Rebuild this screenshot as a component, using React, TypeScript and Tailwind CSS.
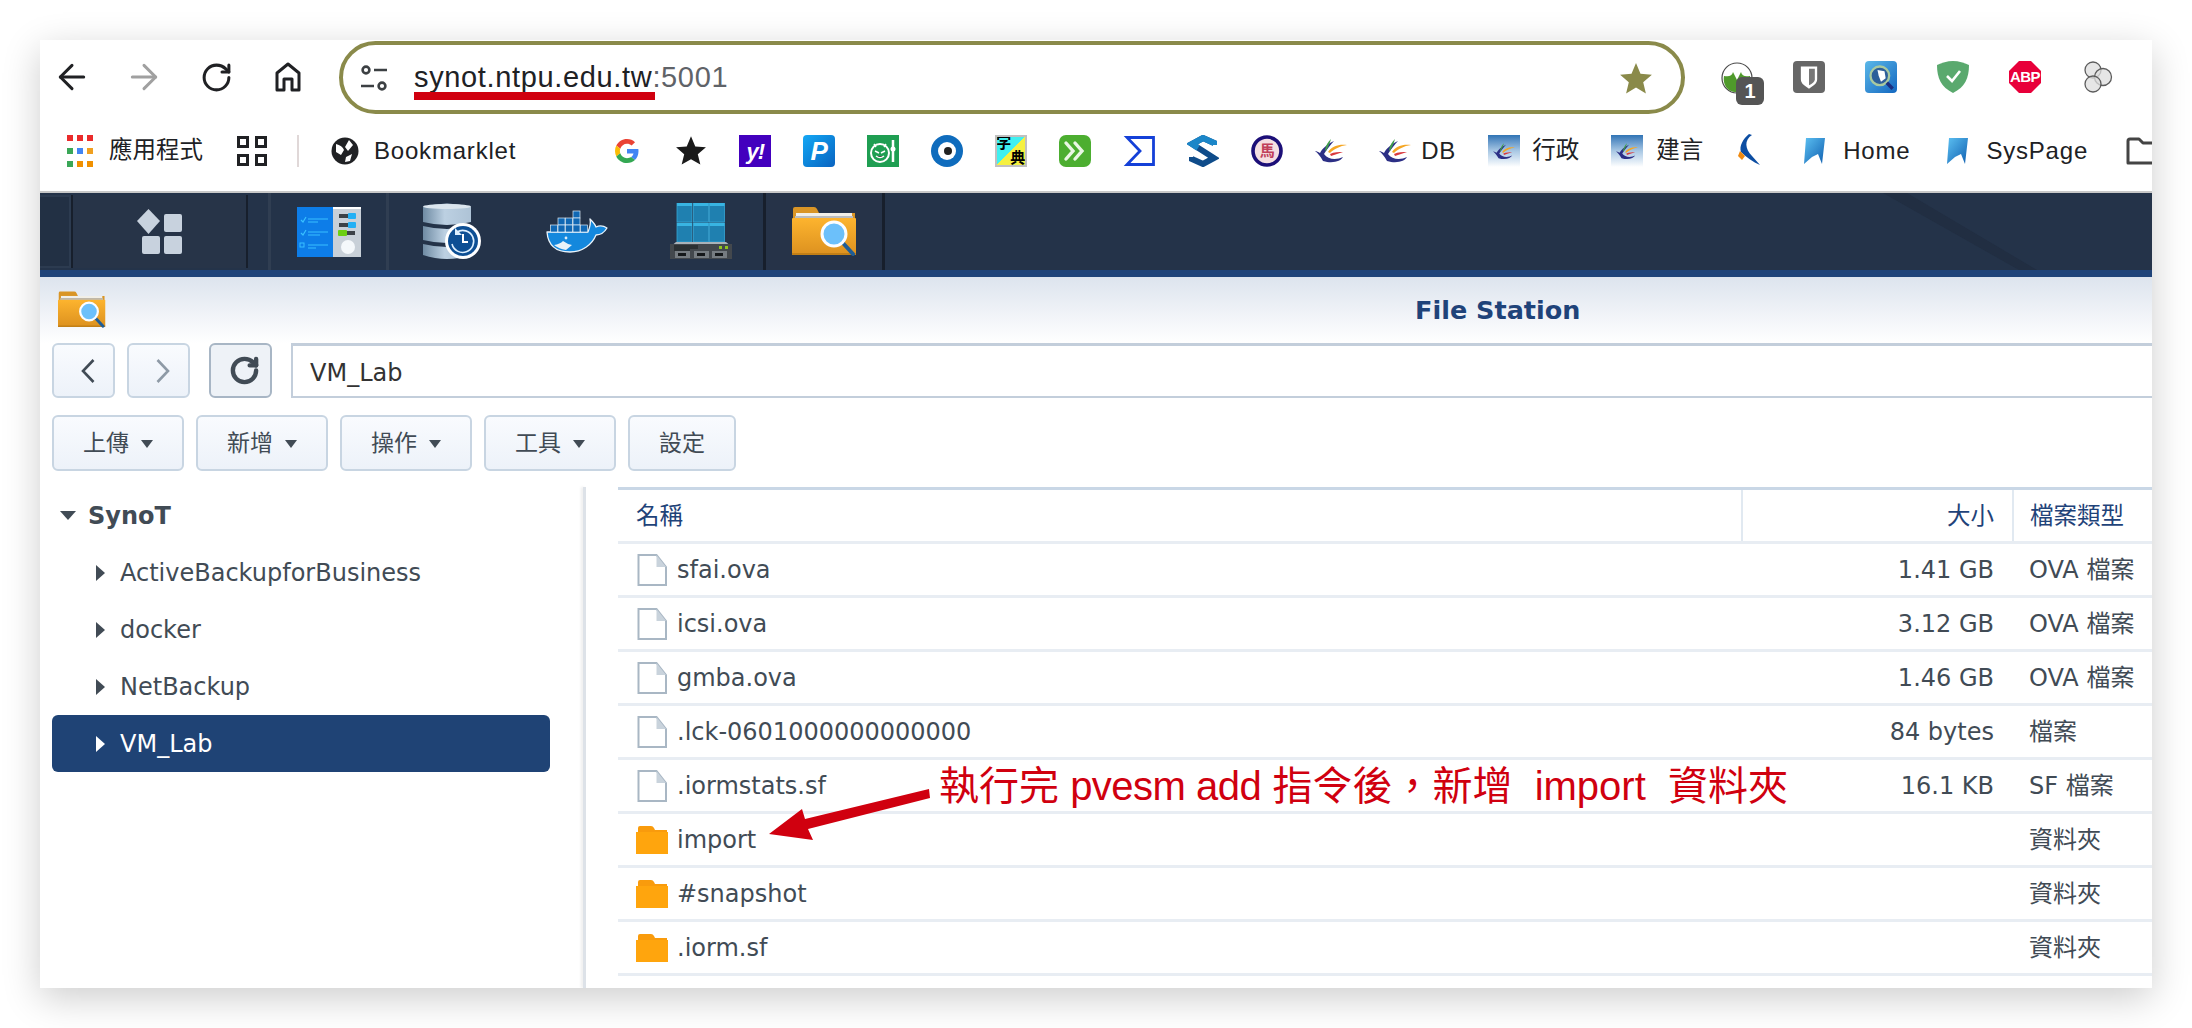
import { ArrowLeft, ArrowRight, RotateCw } from "lucide-react";

const CJK = "font-['Liberation_Sans','Noto_Sans_CJK_TC',sans-serif]";
const DSM = "font-['DejaVu_Sans','Noto_Sans_CJK_TC',sans-serif]";
const LATIN_MARK = "text-[24px] tracking-[0.8px]";
const CJK_MARK = "text-[23.5px]";

const files = [
  { name: "sfai.ova", size: "1.41 GB", type: "OVA 檔案", folder: false },
  { name: "icsi.ova", size: "3.12 GB", type: "OVA 檔案", folder: false },
  { name: "gmba.ova", size: "1.46 GB", type: "OVA 檔案", folder: false },
  { name: ".lck-0601000000000000", size: "84 bytes", type: "檔案", folder: false },
  { name: ".iormstats.sf", size: "16.1 KB", type: "SF 檔案", folder: false },
  { name: "import", size: "", type: "資料夾", folder: true },
  { name: "#snapshot", size: "", type: "資料夾", folder: true },
  { name: ".iorm.sf", size: "", type: "資料夾", folder: true },
];

const treeItems = ["ActiveBackupforBusiness", "docker", "NetBackup"];
const menus = ["上傳", "新增", "操作", "工具"];

function FolderSearch({ className }: { className: string }) {
  return (
    <svg viewBox="0 0 65 52" className={className}>
      <defs>
        <linearGradient id="fs" x1="0" y1="0" x2="0" y2="1">
          <stop offset="0" stopColor="#fdb42e" />
          <stop offset="1" stopColor="#dd9220" />
        </linearGradient>
      </defs>
      <path d="M1 16V3q0-2 2-2h19q2 0 3 2l2 4h36v12z" fill="#d99526" />
      <rect x="4" y="7" width="56" height="3" fill="#f1efe8" />
      <rect x="3" y="10" width="58" height="3" fill="#b9bcc0" />
      <rect x="0" y="12" width="64" height="36" rx="1" fill="url(#fs)" />
      <rect x="0" y="47" width="64" height="2" fill="#c27f16" />
      <path d="M50 36l11 12" stroke="#1f5d96" strokeWidth="4" strokeLinecap="round" />
      <circle cx="42" cy="28" r="12" fill="#6cc0fa" stroke="#fbfdff" strokeWidth="3" />
    </svg>
  );
}

function TileIcon() {
  return (
    <svg viewBox="0 0 45 45" className="h-[45px] w-[45px]">
      <path d="M11.5 0L23 12 11.5 25 0 12z" fill="#c8d2de" />
      <rect x="27" y="5" width="18" height="18" rx="2" fill="#c8d2de" />
      <rect x="5" y="27" width="18" height="18" rx="2" fill="#c8d2de" />
      <rect x="27" y="27" width="18" height="18" rx="2" fill="#c8d2de" />
    </svg>
  );
}

function PanelIcon() {
  return (
    <svg viewBox="0 0 64 50" className="h-[50px] w-[64px]">
      <rect x="36" y="0" width="28" height="50" fill="#c8d0d8" />
      <rect x="36" y="0" width="28" height="2" fill="#fff" />
      <rect x="0" y="0" width="36" height="50" fill="#0d7de8" />
      <path d="M4 13l2 2 3-5M4 26l2 2 3-5" stroke="#38c0ff" strokeWidth="1.2" fill="none" />
      <rect x="3" y="36" width="4" height="4" fill="none" stroke="#38c0ff" strokeWidth="1" />
      <path d="M11 12h20M11 15h10M11 25h20M11 28h12M11 38h20M11 41h8" stroke="#38c0ff" strokeWidth="1" />
      <rect x="42" y="7" width="16" height="4" fill="#3c4248" />
      <rect x="51" y="6" width="8" height="6" rx="1" fill="#22b0f5" />
      <rect x="42" y="16" width="16" height="4" fill="#3c4248" />
      <rect x="51" y="15" width="8" height="6" rx="1" fill="#22b0f5" />
      <rect x="42" y="24" width="16" height="4" fill="#3c4248" />
      <rect x="41" y="23" width="9" height="6" rx="1" fill="#6ccf12" />
      <circle cx="51" cy="40" r="7" fill="#f4f8fb" />
    </svg>
  );
}

function DbIcon() {
  return (
    <svg viewBox="0 0 60 58" className="h-[58px] w-[60px]">
      <defs>
        <linearGradient id="cy" x1="0" y1="0" x2="1" y2="0">
          <stop offset="0" stopColor="#6f8ba3" />
          <stop offset=".45" stopColor="#bcd0e2" />
          <stop offset="1" stopColor="#aec3d6" />
        </linearGradient>
      </defs>
      <path d="M1 4q24-7 48 0v15q-24 6-48 0z" fill="url(#cy)" />
      <path d="M1 23q24 6 48 0v14q-24 6-48 0z" fill="url(#cy)" />
      <path d="M1 41q24 6 48 0v11q-24 8-48 0z" fill="url(#cy)" />
      <ellipse cx="25" cy="3.5" rx="24" ry="2.5" fill="#dbe5ee" />
      <circle cx="41" cy="38" r="18" fill="#fff" />
      <circle cx="41" cy="38" r="15" fill="#0d4f94" />
      <path d="M35 29a11 11 0 1 1-5 12" fill="none" stroke="#dcefff" strokeWidth="1.6" />
      <path d="M33 25v7h7z" fill="#dcefff" />
      <path d="M41 31v8h5" fill="none" stroke="#fff" strokeWidth="2" />
    </svg>
  );
}

function DockerIcon() {
  const boxes = [
    [27, 1],
    [12, 8],
    [19.5, 8],
    [27, 8],
    [4.5, 15],
    [12, 15],
    [19.5, 15],
    [27, 15],
    [34.5, 15],
  ];
  return (
    <svg viewBox="0 0 62 43" className="h-[43px] w-[62px]">
      <path
        d="M1 22H42C44 17 45 13 44 9 47 12 49 14 50 17 54 15 58 16 61 18 58 23 54 25 50 25 46 35 36 42 24 42 10 42 2 35 1 22z"
        fill="#1488dd"
        stroke="#eaf4fb"
        strokeWidth="1.3"
        strokeLinejoin="round"
      />
      <path d="M8 35q6-1 9-4 4 3 9 4l-6 5q-7-1-12-5z" fill="#e8f2f8" />
      <circle cx="20" cy="28" r="1.4" fill="#dcecf8" />
      {boxes.map(([x, y]) => (
        <rect key={`${x}-${y}`} x={x} y={y} width="7" height="7" fill="#1068b4" stroke="#dfeef8" strokeWidth=".7" />
      ))}
    </svg>
  );
}

function ServerIcon() {
  const cells = [7, 23.5, 39.5];
  return (
    <svg viewBox="0 0 62 57" className="h-[57px] w-[62px]">
      {[0, 20].map((y) =>
        cells.map((x) => (
          <g key={`${x}-${y}`}>
            <rect x={x} y={y} width="15" height="19" fill="#1f80b0" stroke="#36a6d6" strokeWidth=".8" />
            <rect x={x} y={y} width="15" height="3" fill="#38b4e2" />
          </g>
        )),
      )}
      <path d="M6 39h50l6 5H0z" fill="#aab2b8" />
      <rect x="0" y="41" width="62" height="15" fill="#43484d" />
      <path d="M4 43h24M4 45h24M4 47h16" stroke="#15181a" strokeWidth="1" />
      <rect x="49" y="43" width="3" height="3" fill="#8fc31f" />
      <rect x="55" y="43" width="3" height="3" fill="#8fc31f" />
      {[5, 24, 42].map((x) => (
        <g key={x}>
          <rect x={x} y="48" width="15" height="7" fill="#767c81" />
          <rect x={x + 3} y="50" width="8" height="3" fill="#15181a" />
        </g>
      ))}
    </svg>
  );
}

function GoogleIcon() {
  return (
    <svg viewBox="0 0 48 48" className="h-6 w-6">
      <path fill="#EA4335" d="M24 9.5c3.54 0 6.71 1.22 9.21 3.6l6.85-6.85C35.9 2.38 30.47 0 24 0 14.62 0 6.51 5.38 2.56 13.22l7.98 6.19C12.43 13.72 17.74 9.5 24 9.5z" />
      <path fill="#4285F4" d="M46.98 24.55c0-1.57-.15-3.09-.38-4.55H24v9.02h12.94c-.58 2.96-2.26 5.48-4.78 7.18l7.73 6c4.51-4.18 7.09-10.36 7.09-17.65z" />
      <path fill="#FBBC05" d="M10.53 28.59c-.48-1.45-.76-2.99-.76-4.59s.27-3.14.76-4.59l-7.98-6.19C.92 16.46 0 20.12 0 24c0 3.88.92 7.54 2.56 10.78l7.97-6.19z" />
      <path fill="#34A853" d="M24 48c6.48 0 11.93-2.13 15.89-5.81l-7.73-6c-2.15 1.45-4.92 2.3-8.16 2.3-6.26 0-11.57-4.22-13.47-9.91l-7.98 6.19C6.51 42.62 14.62 48 24 48z" />
    </svg>
  );
}

function Feather({ className }: { className: string }) {
  return (
    <svg viewBox="0 0 32 28" className={className}>
      <path d="M8 24C18 27 26 24 28 20 22 23 13 23 9 17 13 11 16 7 19 4 12 7 7 12 5 16 3 15 2 14 0 14 3 16 5 19 8 24z" fill="#2c2f85" />
      <path d="M13 15C17 9 24 7 32 8 25 9 19 12 15 16z" fill="#f5a623" />
      <path d="M15 17C19 15 24 15 28 15 24 16 20 18 16 19z" fill="#d9393e" />
      <path d="M10 13C11 8 13 5 16 2 15 6 13 10 11 14z" fill="#3f9c4a" />
    </svg>
  );
}

function BlueFeatherTile() {
  return (
    <div className="flex h-8 w-8 items-center justify-center bg-gradient-to-b from-[#2f74b5] via-[#a9c8e4] to-white">
      <Feather className="h-[19px] w-[22px]" />
    </div>
  );
}

function Ribbon() {
  return (
    <svg viewBox="0 0 21 28" className="h-7 w-[21px]">
      <defs>
        <linearGradient id="rb" x1="0" y1="0" x2="1" y2="1">
          <stop offset="0" stopColor="#5cc0f2" />
          <stop offset="1" stopColor="#0f5fb0" />
        </linearGradient>
      </defs>
      <path d="M2 1h19l-3 26-4-10-6 3-8 7z" fill="url(#rb)" />
    </svg>
  );
}

function Toolbar() {
  return (
    <div className="flex h-[87px] items-start bg-white">
      <div className="flex h-[74px] items-center pl-3">
        <ArrowLeft size={40} strokeWidth={1.8} className="text-[#202124]" />
        <ArrowRight size={40} strokeWidth={1.8} className="ml-[32px] text-[#a0a0a0]" />
        <RotateCw size={33} strokeWidth={2.2} className="ml-[36px] text-[#202124]" />
        <svg viewBox="0 0 26 30" className="ml-[42px] h-[30px] w-[26px]">
          <path d="M2 28V11L13 2l11 9v17h-7V17H9v11z" fill="none" stroke="#202124" strokeWidth="3" strokeLinejoin="round" />
        </svg>
      </div>
      <div className="mt-px ml-[38px] flex h-[73px] w-[1346px] items-center rounded-full border-[4px] border-[#8a8a4a] bg-white pr-[27px] pl-[18px]">
        <svg viewBox="0 0 26 26" className="h-[26px] w-[26px]">
          <g fill="none" stroke="#3c4043" strokeWidth="2.6">
            <circle cx="5" cy="5" r="3.4" />
            <path d="M13 5h13M0 21h13" />
            <circle cx="21" cy="21" r="3.4" />
          </g>
        </svg>
        <div className={`ml-[27px] text-[29px] tracking-[0.65px] text-[#202124] ${CJK}`}>
          synot.ntpu.edu.tw<span className="text-[#5f6368]">:5001</span>
        </div>
        <svg viewBox="0 0 24 24" className="ml-auto h-9 w-9">
          <path d="M12 2l3 7.2 7.6.6-5.8 5 1.8 7.5L12 18.3l-6.6 4 1.8-7.5-5.8-5L9 9.2z" fill="#8a8a4a" />
        </svg>
      </div>
      <div className="ml-[36px] flex h-[74px] items-center gap-10">
        <div className="relative h-[30px] w-8">
          <svg viewBox="0 0 32 32" className="h-8 w-8">
            <circle cx="16" cy="16" r="15" fill="#fff" stroke="#4a4a4a" strokeWidth="1.2" />
            <path d="M3 14c5 1 8 0 9-4l4 8 4-8c1 4 4 5 9 4 1 6-1 11-5 14-5 3-11 3-16 0-4-3-6-8-5-14z" fill="#4f9a2b" />
          </svg>
          <div className={`absolute top-[15px] left-[15px] flex h-7 w-7 items-center justify-center rounded-md bg-[#555] text-[20px] font-bold text-white ${CJK}`}>
            1
          </div>
        </div>
        <div className="flex h-8 w-8 items-center justify-center rounded-[4px] bg-[#666]">
          <svg viewBox="0 0 24 24" className="h-7 w-7">
            <path d="M5 3h14v11c0 4-4 6-7 8-3-2-7-4-7-8z" fill="#fff" />
            <path d="M12 5h5v9c0 2-2 4-5 5z" fill="#777" />
          </svg>
        </div>
        <div className="flex h-8 w-8 items-center justify-center rounded-[4px] bg-gradient-to-br from-[#5bb8e8] to-[#1267c0]">
          <svg viewBox="0 0 24 24" className="h-7 w-7">
            <circle cx="11" cy="11" r="8" fill="#2d5f9a" stroke="#a9c9a0" strokeWidth="2" />
            <path d="M9 6l6 1 1 6-4 3-2-5z" fill="#fff" />
            <path d="M17 17l5 5" stroke="#1b2f80" strokeWidth="3" />
          </svg>
        </div>
        <svg viewBox="0 0 32 32" className="h-8 w-8">
          <path d="M16 0c6 0 11 2 16 4 0 13-4 22-16 28C4 26 0 17 0 4c5-2 10-4 16-4z" fill="#5aa96e" />
          <path d="M10 15l5 5 8-10" fill="none" stroke="#fff" strokeWidth="2.6" />
        </svg>
        <div className="relative h-8 w-8">
          <svg viewBox="0 0 32 32" className="h-8 w-8">
            <path d="M10 0h12l10 10v12L22 32H10L0 22V10z" fill="#e8003a" />
          </svg>
          <div className={`absolute inset-0 flex items-center justify-center text-[15px] font-bold tracking-[-0.5px] text-white ${CJK}`}>ABP</div>
        </div>
        <svg viewBox="0 0 32 32" className="h-8 w-8">
          <g fill="#dedede" fillOpacity=".75" stroke="#5c5c5c" strokeWidth="1.3">
            <circle cx="12" cy="9" r="8" />
            <circle cx="22" cy="16" r="8.5" />
            <circle cx="12" cy="23" r="8" />
          </g>
        </svg>
      </div>
    </div>
  );
}

function Bookmarks() {
  return (
    <div className={`flex h-[64px] items-start overflow-hidden bg-white pl-[27px] whitespace-nowrap text-[#202124] ${CJK}`}>
      <div className="flex h-12 shrink-0 items-center">
        <div className="grid shrink-0 grid-cols-3 gap-x-[4px] gap-y-[7px]">
          {["#ea2b2b", "#ea2b2b", "#ea2b2b", "#3aa757", "#4285f4", "#f0a020", "#3aa757", "#f09000", "#f09000"].map((c, i) => (
            <div key={i} className="h-[6px] w-[6px]" style={{ backgroundColor: c }} />
          ))}
        </div>
        <span className={`ml-[16px] ${CJK_MARK}`}>應用程式</span>
        <div className="ml-[34px] grid shrink-0 grid-cols-2 gap-[6px]">
          {[0, 1, 2, 3].map((i) => (
            <div key={i} className="h-[12px] w-[12px] border-[3px] border-[#202124]" />
          ))}
        </div>
        <div className="ml-[30px] h-8 w-[2px] shrink-0 bg-[#e0d8d8]" />
        <svg viewBox="0 0 28 32" className="ml-[32px] h-8 w-7 shrink-0">
          <circle cx="14" cy="16" r="13.5" fill="#202124" />
          <path d="M5 9c4 1 7 3 8 6l-3 5-5-3zM18 5l4 5-5 6-3-4zM15 22l6-3-2 7-5 1z" fill="#fff" />
        </svg>
        <span className={`ml-[15px] ${LATIN_MARK}`}>Bookmarklet</span>
        <div className="ml-[95px] flex items-center gap-8">
          <div className="flex h-8 w-8 items-center justify-center"><GoogleIcon /></div>
          <svg viewBox="0 0 24 24" className="h-8 w-8"><path d="M12 1l3.2 7.6 8 .6-6.1 5.2 1.9 7.8L12 18.1l-7 4.1 1.9-7.8L.8 9.2l8-.6z" fill="#1a1a1a" /></svg>
          <div className="flex h-8 w-8 items-center justify-center bg-[#4300be] text-[22px] font-bold tracking-[-1px] text-white italic">y!</div>
          <div className="flex h-8 w-8 items-center justify-center rounded-[4px] bg-gradient-to-br from-[#15a8f5] to-[#0b63c0] text-[26px] font-bold text-white italic">P</div>
          <svg viewBox="0 0 32 32" className="h-8 w-8">
            <rect width="32" height="32" fill="#1f9e52" />
            <circle cx="13" cy="18" r="9" fill="none" stroke="#fff" strokeWidth="2" />
            <path d="M8 16l4 2M18 16l-4 2M9 21q4 3 8 0M7 9l2 3M19 9l-2 3" stroke="#fff" strokeWidth="1.5" />
            <path d="M26 5v22" stroke="#fff" strokeWidth="2.5" />
            <circle cx="26" cy="14" r="2.5" fill="#fff" />
          </svg>
          <svg viewBox="0 0 32 32" className="h-8 w-8">
            <circle cx="16" cy="16" r="16" fill="#0f6cbd" />
            <circle cx="16" cy="16" r="9" fill="#fff" />
            <circle cx="17" cy="16" r="4" fill="#222" />
          </svg>
          <div className="relative h-8 w-8 overflow-hidden border-[2px] border-[#c0c0c0] bg-[linear-gradient(135deg,#40f0f0_50%,#f5f040_50%)]">
            <span className={`absolute -top-[2px] -left-[1px] text-[15px] leading-none font-bold text-black ${CJK}`}>字</span>
            <span className={`absolute right-0 bottom-0 text-[15px] leading-none font-bold text-black ${CJK}`}>典</span>
          </div>
          <svg viewBox="0 0 32 32" className="h-8 w-8">
            <rect width="32" height="32" rx="7" fill="#4cae30" />
            <path d="M7 8l7 8-7 8M16 8l7 8-7 8" fill="none" stroke="#eaf7e4" strokeWidth="3.4" strokeLinecap="round" />
          </svg>
          <svg viewBox="0 0 32 32" className="h-8 w-8">
            <path d="M30.5 2.5H4l13 13.5L4 29.5h26.5z" fill="none" stroke="#1440d8" strokeWidth="2.8" />
          </svg>
          <svg viewBox="0 0 32 32" className="h-8 w-8">
            <path d="M27 10V8L16 3 5 9l22 14-11 6-11-5v-2" fill="none" stroke="#0f4c8a" strokeWidth="6" />
            <path d="M27 10V8L16 3 5 9l6 4" fill="none" stroke="#1b86c8" strokeWidth="6" />
          </svg>
          <div className="relative h-8 w-8">
            <svg viewBox="0 0 32 32" className="h-8 w-8">
              <circle cx="16" cy="16" r="14" fill="#f4dfe2" stroke="#1c0f78" strokeWidth="3.6" />
            </svg>
            <span className="absolute inset-0 flex items-center justify-center text-[15px] font-bold text-[#c0405a]">馬</span>
          </div>
          <Feather className="h-7 w-8" />
          <div className="flex items-center">
            <Feather className="h-7 w-8" />
            <span className={`ml-[10px] ${LATIN_MARK}`}>DB</span>
          </div>
          <div className="flex items-center">
            <BlueFeatherTile />
            <span className={`ml-[12px] ${CJK_MARK}`}>行政</span>
          </div>
          <div className="flex items-center">
            <BlueFeatherTile />
            <span className={`ml-[13px] ${CJK_MARK}`}>建言</span>
          </div>
          <svg viewBox="0 0 32 34" className="h-[34px] w-8">
            <path d="M14 0l3 1C9 6 10 15 17 22l8 9c-7-3-14-8-19-13C4 12 8 5 14 0z" fill="#0c4da2" />
            <path d="M5 17l5 5-3 4-4-4z" fill="#f08a10" />
          </svg>
          <div className="ml-[5px] flex items-center">
            <Ribbon />
            <span className={`ml-[18px] ${LATIN_MARK}`}>Home</span>
          </div>
          <div className="ml-[5px] flex items-center">
            <Ribbon />
            <span className={`ml-[18px] ${LATIN_MARK}`}>SysPage</span>
          </div>
          <svg viewBox="0 0 34 28" className="ml-[6px] h-7 w-[34px] shrink-0">
            <path d="M2 26V4q0-2 2-2h9l4 4h15v20z" fill="none" stroke="#444" strokeWidth="3" strokeLinejoin="round" />
          </svg>
        </div>
      </div>
    </div>
  );
}

function Taskbar() {
  return (
    <div className="relative flex h-[77px] overflow-hidden bg-[#243349]">
      <svg viewBox="0 0 160 77" className="absolute top-0 left-[1843px] h-[77px] w-[160px]">
        <path d="M0 0h24l130 77h-18z" fill="#212e42" />
      </svg>
      <div className="mt-[2px] h-[73px] w-[31px] border-[2px] border-l-0 border-[#2c3b50] bg-[#223044]" />
      <div className="mt-[2px] flex h-[73px] w-[177px] items-center justify-center border-x-[2px] border-x-[#171f2c] bg-[#273448]">
        <TileIcon />
      </div>
      <div className="w-[20px]" />
      <div className="flex w-[121px] items-center justify-center border-x-[3px] border-x-[#303e52]"><PanelIcon /></div>
      <div className="flex w-[126px] items-center justify-center"><DbIcon /></div>
      <div className="flex w-[124px] items-center justify-center"><DockerIcon /></div>
      <div className="flex w-[124px] items-center justify-center"><ServerIcon /></div>
      <div className="flex w-[122px] items-center justify-center border-x-[3px] border-x-[#171f2c] bg-[#263348]">
        <FolderSearch className="h-[52px] w-[65px]" />
      </div>
    </div>
  );
}

function IconButton({ children, pressed }: { children: React.ReactNode; pressed?: boolean }) {
  return (
    <div
      className={`flex h-[55px] w-[63px] items-center justify-center rounded-[6px] border-[2px] pl-2 ${
        pressed ? "border-[#a8b6c5] bg-[#eef2f7]" : "border-[#c8d5e2] bg-gradient-to-b from-[#f9fbfe] to-[#edf2f9]"
      }`}
    >
      {children}
    </div>
  );
}

function MenuButton({ label }: { label: string }) {
  return (
    <div className="flex h-[56px] w-[132px] items-center justify-center gap-[12px] rounded-[6px] border-[2px] border-[#c8d5e2] bg-gradient-to-b from-[#f9fbfe] to-[#edf2f9] text-[23px] text-[#414b55]">
      <span>{label}</span>
      <div className="mt-[2px] h-0 w-0 border-x-[6px] border-t-[8px] border-x-transparent border-t-[#414b55]" />
    </div>
  );
}

function TreeArrow({ white }: { white?: boolean }) {
  return (
    <div className={`h-0 w-0 border-y-[8px] border-l-[9px] border-y-transparent ${white ? "border-l-white" : "border-l-[#414b55]"}`} />
  );
}

function FileIcon() {
  return (
    <svg viewBox="0 0 30 32" className="h-8 w-[30px]">
      <path d="M1.5 1h18L29 13v18H1.5z" fill="#fff" stroke="#a9b7c4" strokeWidth="2" />
      <path d="M19.5 1v12H29z" fill="#c9d3dc" />
    </svg>
  );
}

function FolderIcon() {
  return (
    <svg viewBox="0 0 32 28" className="h-7 w-8">
      <path d="M2 6V2q0-2 2-2h11q2 0 3 2l1 2h12v3H2z" fill="#f99b0c" />
      <rect x="0" y="6" width="32" height="22" fill="#ffa50d" />
    </svg>
  );
}

export default function App() {
  return (
    <div className={`relative h-[1028px] w-[2192px] overflow-hidden bg-white px-10 pt-10 ${DSM}`}>
      <div className="h-[948px] overflow-hidden bg-white shadow-[0_10px_36px_rgba(0,0,0,0.2)]">
        <Toolbar />
        <Bookmarks />
        <div className="h-[2px] bg-[#c8c8c8]" />
        <Taskbar />
        <div className="h-[7px] bg-[#1f4379]" />

        <div className="flex h-[66px] bg-gradient-to-b from-[#dde4ee] to-white">
          <FolderSearch className="mt-[13px] ml-[18px] h-[40px] w-[48px]" />
          <div className="mt-[14px] ml-[1309px] text-[25.5px] font-bold text-[#1f4379]">File Station</div>
        </div>

        <div className="flex gap-3 pl-3">
          <IconButton>
            <svg viewBox="0 0 14 24" className="h-6 w-[14px]"><path d="M12.5 1L2 12l10.5 11" fill="none" stroke="#414b55" strokeWidth="2.6" /></svg>
          </IconButton>
          <IconButton>
            <svg viewBox="0 0 14 24" className="h-6 w-[14px]"><path d="M1.5 1L12 12 1.5 23" fill="none" stroke="#8e9aa6" strokeWidth="2.6" /></svg>
          </IconButton>
          <div className="ml-[7px]">
            <IconButton pressed>
              <RotateCw size={31} strokeWidth={3.4} className="text-[#414b55]" />
            </IconButton>
          </div>
          <div className="ml-[7px] flex h-[55px] flex-1 items-center border-[2px] border-t-[3px] border-r-0 border-[#c3cedb] bg-white pt-1 pl-[17px] text-[24px] text-[#333]">
            VM_Lab
          </div>
        </div>

        <div className="mt-[17px] flex gap-3 pl-3">
          {menus.map((m) => (
            <MenuButton key={m} label={m} />
          ))}
          <div className="flex h-[56px] w-[108px] items-center justify-center rounded-[6px] border-[2px] border-[#c8d5e2] bg-gradient-to-b from-[#f9fbfe] to-[#edf2f9] text-[23px] text-[#414b55]">
            設定
          </div>
        </div>

        <div className="mt-[16px] flex h-[501px]">
          <div className="w-[543px] pl-3 text-[24px] text-[#414b55]">
            <div className="flex h-[57px] items-center pl-2 font-bold">
              <div className="h-0 w-0 border-x-[8px] border-t-[9px] border-x-transparent border-t-[#414b55]" />
              <span className="ml-3">SynoT</span>
            </div>
            {treeItems.map((t) => (
              <div key={t} className="flex h-[57px] items-center pl-11">
                <TreeArrow />
                <span className="ml-[15px]">{t}</span>
              </div>
            ))}
            <div className="flex h-[57px] w-[498px] items-center rounded-[6px] bg-[#1f4375] pl-11 text-white">
              <TreeArrow white />
              <span className="ml-[15px]">VM_Lab</span>
            </div>
          </div>

          <div className="w-[3px] bg-[#dde2e8] shadow-[-2px_0_3px_rgba(0,0,0,0.08)]" />

          <div className="ml-[32px] flex-1 text-[24px] text-[#414b55]">
            <div className="flex h-[57px] items-center border-t-[3px] border-b-[3px] border-t-[#c9d7e6] border-b-[#e8edf3] text-[23.5px] text-[#1f4379]">
              <div className="w-[1123px] pt-[2px] pl-[18px]">名稱</div>
              <div className="flex h-full w-[271px] items-center justify-end border-l-[2px] border-l-[#e1e9f1] pt-[2px] pr-[18px]">大小</div>
              <div className="flex h-full flex-1 items-center border-l-[2px] border-l-[#e1e9f1] pt-[2px] pl-[16px]">檔案類型</div>
            </div>
            {files.map((f) => (
              <div key={f.name} className="flex h-[54px] items-center border-b-[3px] border-b-[#e8edf3] whitespace-nowrap">
                <div className="flex w-[1123px] items-center pl-[18px]">
                  <div className="flex w-[32px] justify-center">{f.folder ? <FolderIcon /> : <FileIcon />}</div>
                  <span className="ml-[9px]">{f.name}</span>
                </div>
                <div className="w-[271px] pr-[18px] text-right">{f.size}</div>
                <div className="flex-1 pl-[17px]">{f.type}</div>
              </div>
            ))}
          </div>
        </div>
      </div>

      {/* red markup drawn on top of the screenshot */}
      <div className="absolute top-[92px] left-[414px] h-[8px] w-[241px] bg-[#d0000f]" />
      <div className={`absolute top-[762px] left-[939px] text-[40px] leading-[48px] whitespace-pre text-[#d0000f] ${CJK}`}>
        執行完 <span className="tracking-[-0.5px]">pvesm add</span> 指令後，新增  import  資料夾
      </div>
      <svg viewBox="0 0 170 52" className="absolute top-[788px] left-[766px] h-[52px] w-[170px]">
        <path d="M3 46L36 21 39 31 163 1l1 9L42 41l5 11z" fill="#d0000f" />
      </svg>
    </div>
  );
}
